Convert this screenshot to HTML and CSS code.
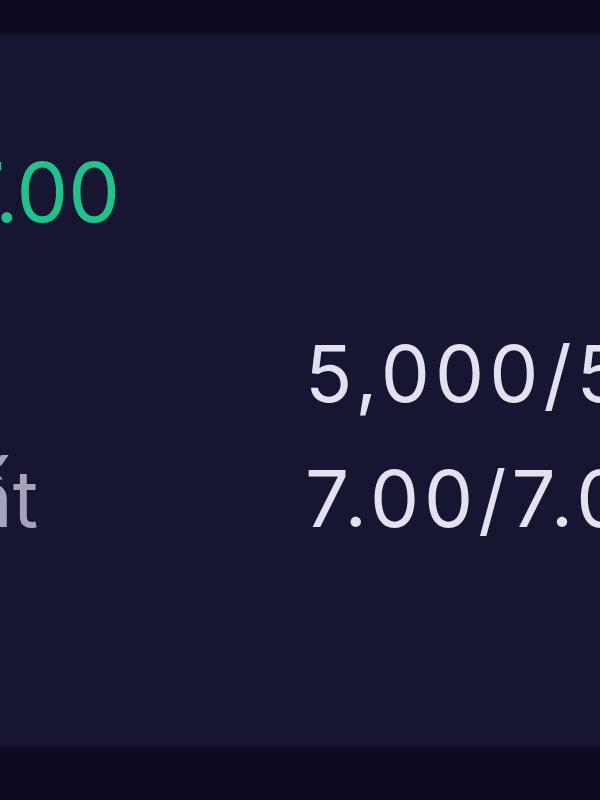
FILE: index.html
```html
<!DOCTYPE html>
<html lang="vi">
<head>
<meta charset="utf-8">
<title>Rút tiền</title>
<link rel="stylesheet" href="styles.css">
</head>
<body>
<div class="top-bar"></div>
<div class="card">
  <div class="inner">
    <div class="amount">7.00</div>
    <div class="rows">
      <div class="row">
        <div class="label">Số lần rút</div>
        <div class="value">5,000/5,000</div>
      </div>
      <div class="row">
        <div class="label">Hạn mức cao nhất</div>
        <div class="value">7.00/7.00</div>
      </div>
    </div>
  </div>
</div>
<div class="bottom-bar"></div>
</body>
</html>
```
FILE: styles.css
```css
html, body {
  margin: 0;
  padding: 0;
  width: 600px;
  height: 800px;
  overflow: hidden;
  background: #0c0b22;
  font-family: Inter, "Noto Sans", sans-serif;
}
.top-bar {
  height: 34px;
  background: #0c0b22;
}
.card {
  height: 712px;
  background: #161532;
  overflow: hidden;
  padding-top: 109px;
  box-sizing: border-box;
}
.inner {
  margin-left: -634px;
  width: 1600px;
}
.amount {
  width: 754px;
  text-align: right;
  font-size: 82px;
  line-height: 100px;
  color: #1ec58b;
  white-space: nowrap;
}
.rows {
  margin-top: 81px;
  display: flex;
  flex-direction: column;
  gap: 25px;
}
.row {
  display: grid;
  grid-template-columns: 939px auto;
  font-size: 78px;
  line-height: 100px;
  white-space: nowrap;
}
.label {
  color: #a5a3bb;
}
.value {
  color: #e2e1ee;
  letter-spacing: 5px;
}
.bottom-bar {
  height: 54px;
  background: #0c0b22;
}
```
